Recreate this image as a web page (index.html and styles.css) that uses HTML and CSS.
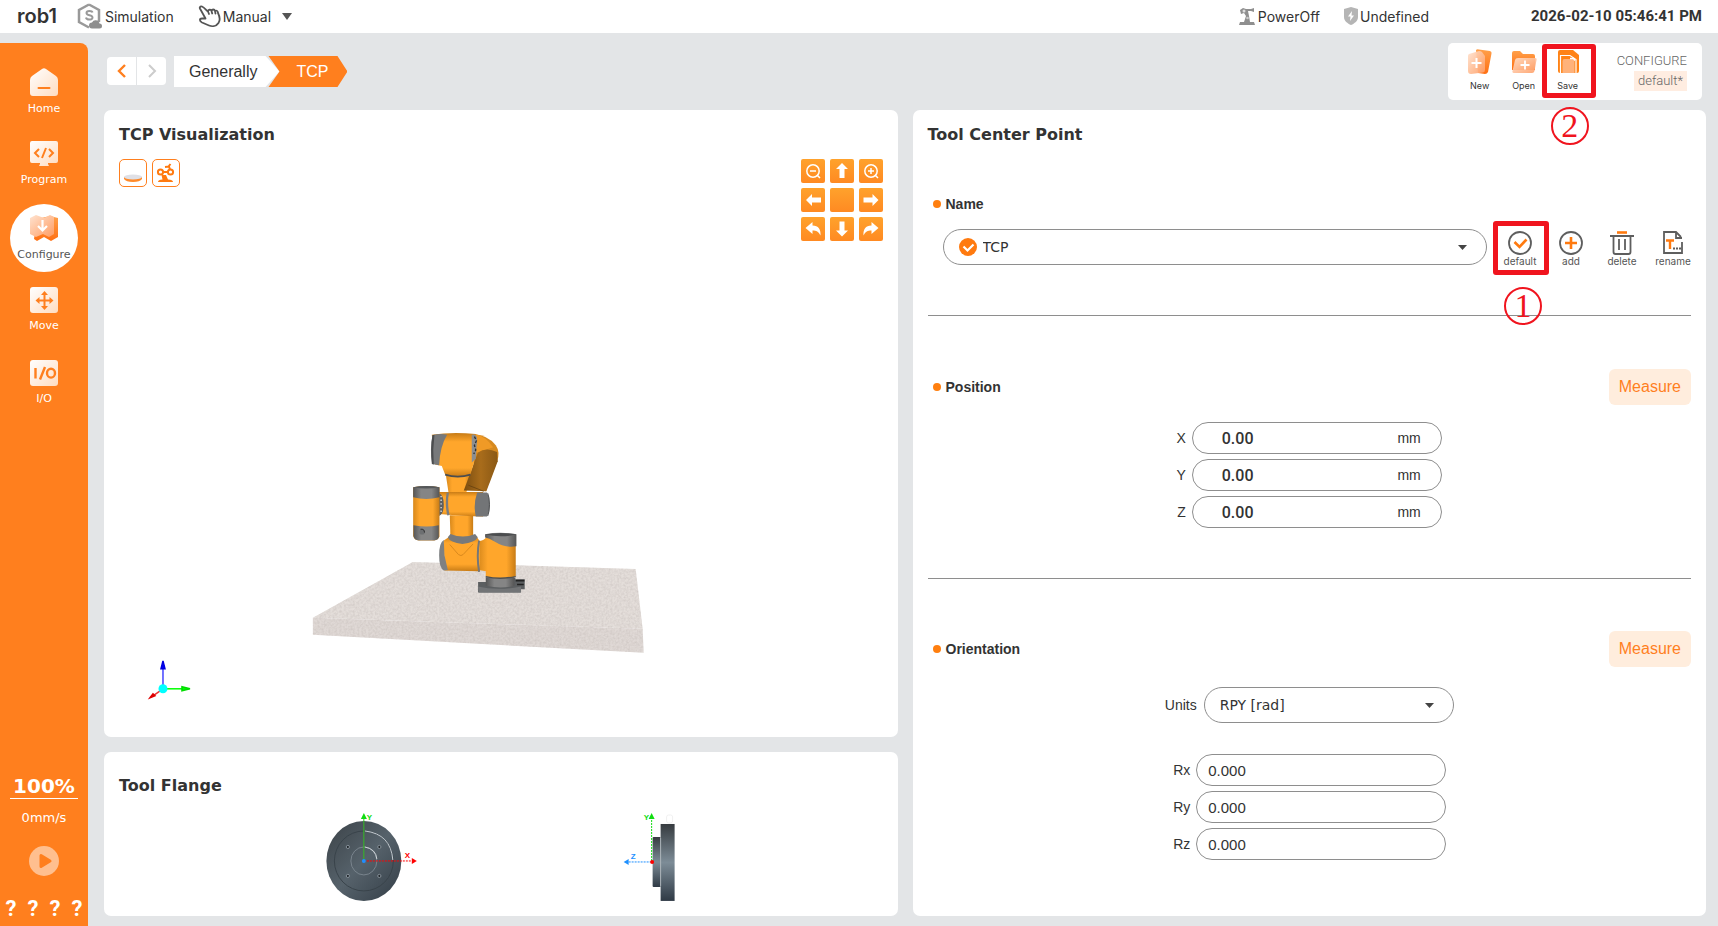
FILE: index.html
```
<!DOCTYPE html>
<html lang="en">
<head>
<meta charset="utf-8">
<title>rob1 - TCP configuration</title>
<meta name="viewport" content="width=device-width, initial-scale=1">
<link rel="stylesheet" href="styles.css">
</head>
<body>
<svg class="defs" aria-hidden="true">
  <defs>
    <linearGradient id="pale" x1="0" y1="0" x2="1" y2="1"><stop offset="0" stop-color="#fff"/><stop offset="1" stop-color="#ffdcc0"/></linearGradient>
    <linearGradient id="peach" x1="0" y1="0" x2="1" y2="1"><stop offset="0" stop-color="#ffe3d0"/><stop offset="1" stop-color="#ff9c62"/></linearGradient>
    <linearGradient id="deep" x1="0" y1="0" x2="0" y2="1"><stop offset="0" stop-color="#ffa04a"/><stop offset="1" stop-color="#ff6f12"/></linearGradient>
    <linearGradient id="limb" x1="0" y1="0" x2="1" y2="0"><stop offset="0" stop-color="#d8891c"/><stop offset=".25" stop-color="#ffa62b"/><stop offset=".75" stop-color="#ffa62b"/><stop offset="1" stop-color="#c87c16"/></linearGradient>
    <linearGradient id="limbh" x1="0" y1="0" x2="0" y2="1"><stop offset="0" stop-color="#c87c16"/><stop offset=".2" stop-color="#ffa62b"/><stop offset=".8" stop-color="#ffa62b"/><stop offset="1" stop-color="#c87c16"/></linearGradient>
    <linearGradient id="cap" x1="0" y1="0" x2="1" y2="0"><stop offset="0" stop-color="#555"/><stop offset=".3" stop-color="#858585"/><stop offset=".7" stop-color="#858585"/><stop offset="1" stop-color="#555"/></linearGradient>
    <linearGradient id="shade" x1="0" y1="0" x2="1" y2="0"><stop offset="0" stop-color="#7b4d10"/><stop offset=".5" stop-color="#a86c1b"/><stop offset="1" stop-color="#8a5814"/></linearGradient>
    <linearGradient id="disc" x1="0" y1="0" x2="1" y2="1"><stop offset="0" stop-color="#3b4247"/><stop offset=".5" stop-color="#56626b"/><stop offset="1" stop-color="#333d46"/></linearGradient>
    <linearGradient id="steel" x1="0" y1="0" x2="0" y2="1"><stop offset="0" stop-color="#363b3f"/><stop offset=".5" stop-color="#7d8c97"/><stop offset="1" stop-color="#2f3a45"/></linearGradient>
    <filter id="grain" x="0" y="0" width="1" height="1">
      <feTurbulence type="fractalNoise" baseFrequency=".45" numOctaves="2" seed="4"/>
      <feColorMatrix values="0 0 0 0 .5  0 0 0 0 .45  0 0 0 0 .43  .8 0 0 0 -.26"/>
      <feComposite in2="SourceGraphic" operator="in" result="n"/>
      <feMerge><feMergeNode in="SourceGraphic"/><feMergeNode in="n"/></feMerge>
    </filter>
  </defs>
</svg>

<header class="header">
  <strong class="robot-name">rob1</strong>
  <span class="status mode-sim">
    <svg width="26" height="26" viewBox="0 0 26 26" fill="none"><path d="M12 1.500 22 7v11l-4 2M12 1.500 2 7v12l10 5.500" stroke="#999" stroke-width="2.500"/><path d="M15.500 9.500C15 7.500 9.500 7 9.500 10c0 3 6 1.500 6 4.500s-6 2.500-6.500 0" stroke="#999" stroke-width="2"/><path d="M15 25.500a3 3 0 0 1 0-6 4 4 0 0 1 7.500 1 2.500 2.500 0 0 1 0 5z" fill="#8e8e8e"/></svg>
    Simulation
  </span>
  <button class="status mode-manual" type="button">
    <svg width="24" height="24" viewBox="0 0 24 24" fill="none" stroke="#555" stroke-width="1.800" stroke-linejoin="round" stroke-linecap="round"><path d="M8.500 14.500 3.500 5.500C2 4 3 2 5 2.500 7.500 3.500 9 6 11 7.500 11 5.500 14 5 14.500 7c.5-2 3-2 3.500 0 1.500-1 3 0 3 2 2 4 2.500 7 .5 10-2 3-6 4-9.500 2.500L5 18.500c-3-1.500-2.500-4 0-4zM11 7.500l1 2.500M14.500 7l.7 2.500M18 7l.5 2.500"/></svg>
    Manual
    <svg class="menu-arrow" width="10" height="7" viewBox="0 0 10 7"><path d="M0 0h10L5 7z" fill="#555"/></svg>
  </button>
  <span class="status power">
    <svg width="17" height="19" viewBox="0 0 17 19"><path d="M1 3 4 1l3 1h5l3-1v4l-3-1H9l1 5 1 6h4l1 3H0l1-3h4l2-6-2-3-3 1z" fill="#8f8f8f"/><circle cx="5" cy="4" r="1.500" fill="#ddd"/><circle cx="8.500" cy="11" r="1.300" fill="#ccc"/></svg>
    PowerOff
  </span>
  <span class="status safety">
    <svg width="14" height="18" viewBox="0 0 14 18"><path d="M7 0l7 2v8c0 4-3.500 6.500-7 8-3.500-1.500-7-4-7-8V2z" fill="#b5b5b5"/><path d="M8 4 4 9.500h2.500L6 14l4-5.500H7.500z" fill="#fff"/></svg>
    Undefined
  </span>
  <time class="clock">2026-02-10 05:46:41 PM</time>
</header>

<div class="app">
  <aside class="sidebar">
    <nav class="nav">
      <a class="nav-item" href="#home">
        <svg width="28" height="28" viewBox="0 0 28 28"><path d="M12 1q2-1.500 4 0l10 7q2 1.500 2 4v13q0 3-3 3H3q-3 0-3-3V12q0-2.500 2-4z" fill="url(#pale)"/><path d="M8.500 20h11" stroke="#ff7f1e" stroke-width="2" stroke-linecap="round"/></svg>
        Home</a>
      <a class="nav-item" href="#program">
        <svg width="28" height="26" viewBox="0 0 28 26"><path d="M2 0h24q2 0 2 2v18q0 2-2 2h-8v1l1 2H9l1-2v-1H2q-2 0-2-2V2q0-2 2-2z" fill="url(#pale)"/><path d="M9 8l-4 4 4 4M19 8l4 4-4 4M16 7l-4 10" stroke="#ff7f1e" stroke-width="2" fill="none"/></svg>
        Program</a>
      <a class="nav-item active" href="#configure" aria-current="page">
        <svg width="30" height="28" viewBox="0 0 30 28"><path d="M8 5 21 2l8 2v19l-7 4-7-4-7 4-3-2z" fill="url(#deep)"/><path d="M1 4l6-3 8 3 6-3 4 2v17l-5 3-6-3-7 3-6-3z" fill="url(#peach)"/><path d="M13.500 6v10M9 12l4.500 4.500L18 12" stroke="#fff" stroke-width="2.200" fill="none"/></svg>
        Configure</a>
      <a class="nav-item" href="#move">
        <svg width="28" height="26" viewBox="0 0 28 26"><rect width="28" height="26" rx="3" fill="url(#pale)"/><path d="M14.500 6v15M7 13.500h15" stroke="#ff7f1e" stroke-width="2"/><path d="M14.500 4l3.500 4h-7zM14.500 23l3.500-4h-7zM5.500 13.500l4-3.500v7zM23.500 13.500l-4-3.500v7z" fill="#ff7f1e"/></svg>
        Move</a>
      <a class="nav-item" href="#io">
        <svg width="28" height="26" viewBox="0 0 28 26"><rect width="28" height="26" rx="3" fill="url(#pale)"/><path d="M5.500 8v10.500M15 7l-5 12.500" stroke="#ff7f1e" stroke-width="2.400"/><ellipse cx="21" cy="13.200" rx="4" ry="4.400" fill="none" stroke="#ff7f1e" stroke-width="2.400"/></svg>
        I/O</a>
    </nav>
    <div class="run">
      <button class="speed" type="button">100%</button>
      <span class="velocity">0mm/s</span>
      <button class="play" type="button" aria-label="Play">
        <svg width="30" height="30" viewBox="0 0 30 30"><circle cx="15" cy="15" r="15" fill="#ffbf8f"/><path d="M12 9.500v11l9-5.500z" fill="#ff7f1e" stroke="#ff7f1e" stroke-width="3" stroke-linejoin="round"/></svg>
      </button>
      <div class="flags"><span>?</span><span>?</span><span>?</span><span>?</span></div>
    </div>
  </aside>

  <main class="main">
    <div class="topbar">
      <div class="history">
        <button type="button" aria-label="Back"><svg width="10" height="14" viewBox="0 0 10 14"><path d="M8 1 2 7l6 6" fill="none" stroke="#ff7f1e" stroke-width="2.400"/></svg></button>
        <button type="button" aria-label="Forward"><svg width="10" height="14" viewBox="0 0 10 14"><path d="m2 1 6 6-6 6" fill="none" stroke="#ccc" stroke-width="2"/></svg></button>
      </div>
      <nav class="crumbs" aria-label="Breadcrumb">
        <a class="crumb" href="#generally">Generally</a>
        <a class="crumb current" href="#tcp">TCP</a>
      </nav>
      <div class="files">
        <button class="file-btn" type="button">
          <svg width="26" height="26" viewBox="0 0 26 26"><path d="M9 1q1-1 3-.5L23 2q2 .5 1.500 2.500L21 23q-1 2-3 2l-7-1z" fill="url(#deep)"/><path d="M2 5 12 2q2 0 3 1l3 4v14q0 2-2 2.500L4 25q-3 0-3-3V7q0-1.500 1-2z" fill="url(#peach)" opacity=".92"/><path d="M9.500 9v10M4.500 14h10" stroke="#fff" stroke-width="2"/></svg>
          New</button>
        <button class="file-btn" type="button">
          <svg width="26" height="26" viewBox="0 0 26 26"><path d="M1 4q0-2 2-2h6l3 3h10q2 0 2 2v14H1z" fill="url(#deep)"/><path d="M7 9h17q2 0 1.500 2l-2 11q-.5 2-2.500 2H3q-2 0-1.500-2L4 11q.5-2 3-2z" fill="url(#peach)" opacity=".9"/><path d="M14 11.500v9M9.500 16h9" stroke="#fff" stroke-width="1.800"/></svg>
          Open</button>
        <button class="file-btn" type="button">
          <svg width="26" height="26" viewBox="0 0 26 26"><path d="M5 1h13l6 5v16q0 2-2 2H5q-2 0-2-2V3q0-2 2-2z" fill="#ff8316"/><path d="M5.500 24V6.500H15l6 4V24" fill="none" stroke="#fff" stroke-width="1.200"/><path d="M7.500 24V12q0-2 2-2h8q2 0 2 2v12z" fill="#ffb27a"/><path d="M15 9.500h3.500l1.500 2" fill="none" stroke="#fff" stroke-width="1.500"/></svg>
          Save
          <span class="mark-box"></span><span class="mark-num">2</span></button>
        <div class="config">
          <span class="config-title">CONFIGURE</span>
          <span class="config-name">default*</span>
        </div>
      </div>
    </div>

    <div class="content">
      <div class="left">
        <section class="panel view">
          <h2>TCP Visualization</h2>
          <div class="view-tools">
            <div class="toggles">
              <button type="button" aria-label="Show plate"><svg width="20" height="20" viewBox="0 0 20 20"><path d="M1 14v2q2 3 9 3t9-3v-2z" fill="#ff8a2a"/><ellipse cx="10" cy="14" rx="9" ry="2.600" fill="#dfe0e6"/></svg></button>
              <button type="button" aria-label="Show robot"><svg width="20" height="20" viewBox="0 0 20 20" fill="none" stroke="#ff7a10" stroke-width="2"><circle cx="4.500" cy="9" r="2.600"/><circle cx="14.500" cy="9" r="2.600"/><path d="M7.500 9h4M14 6.500l-1-3-4 .5M12.500 3.500l2-2.500"/><path d="M2 19q0-2.500 4.500-2.500L5.500 12H10l2 4.500q5 0 5 2.500z" fill="#ff7a10" stroke="none"/></svg></button>
            </div>
            <div class="keypad">
              <button type="button" aria-label="Zoom out"><svg viewBox="0 0 24 24" fill="none" stroke="#fff" stroke-width="1.500"><circle cx="12" cy="12" r="6.200"/><path d="M9 12h6M16 16l3 3"/></svg></button>
              <button type="button" aria-label="Move up"><svg viewBox="0 0 24 24"><path d="M12 4l6 6h-3.500v9h-5v-9H6z" fill="#fff"/></svg></button>
              <button type="button" aria-label="Zoom in"><svg viewBox="0 0 24 24" fill="none" stroke="#fff" stroke-width="1.500"><circle cx="12" cy="12" r="6.200"/><path d="M9 12h6M12 9v6M16 16l3 3"/></svg></button>
              <button type="button" aria-label="Move left"><svg viewBox="0 0 24 24"><path d="M5 12l6-6v3.500h9v5h-9V18z" fill="#fff"/></svg></button>
              <button type="button" aria-label="Reset view"></button>
              <button type="button" aria-label="Move right"><svg viewBox="0 0 24 24"><path d="M19.500 12l-6-6v3.500h-9v5h9V18z" fill="#fff"/></svg></button>
              <button type="button" aria-label="Rotate left"><svg viewBox="0 0 24 24"><path d="M4.500 11l7-6v3.500c6 0 8.500 4 8 10-2-4-4-5-8-5V17z" fill="#fff"/></svg></button>
              <button type="button" aria-label="Move down"><svg viewBox="0 0 24 24"><path d="M12 19.500l6-6h-3.500v-9h-5v9H6z" fill="#fff"/></svg></button>
              <button type="button" aria-label="Rotate right"><svg viewBox="0 0 24 24"><path d="M19.500 11l-7-6v3.500c-6 0-8.500 4-8 10 2-4 4-5 8-5V17z" fill="#fff"/></svg></button>
            </div>
          </div>
          <svg class="scene" viewBox="119 402 764 320" role="img" aria-label="Robot arm on a base plate">
            <g filter="url(#grain)">
              <path d="M413 562 636 569 643 629 313 618z" fill="#e4deda"/>
              <path d="M313 618 643 629 644 653 313 635z" fill="#e0d9d6"/>
            </g>
            <g transform="translate(290 410) scale(.33333)">
              <!-- base -->
              <path d="M565 516h30v-12h82v4h28v30h-12v10H565z" fill="#5b5e60"/>
              <path d="M678 512h26M682 524h20" stroke="#222" stroke-width="5"/>
              <path d="M588 502h86v26q-40 10-86 0z" fill="url(#cap)"/>
              <path d="M564 530q60 14 130 0v18H568z" fill="#727476"/>
              <!-- shoulder -->
              <path d="M566 394q16-2 24-12h88v118q-45 12-90 0v-16l-22-4z" fill="url(#limb)"/>
              <path d="M586 373q46-9 94 0v36q-34 6-66-14-16-10-28-12z" fill="url(#cap)"/>
              <path d="M586 374q46-9 94 0-46 10-94 0z" fill="#4b4d4f"/>
              <path d="M588 500q42 10 90 0" stroke="#4d5052" stroke-width="4" fill="none"/>
              <!-- elbow base -->
              <path d="M462 392l20-14 80 4 8 12v90l-106-2z" fill="url(#limbh)"/>
              <path d="M462 390q-14 8-14 46t14 46l12-2-10-44z" fill="#7e8082"/>
              <path d="M568 392q-8 46 0 94" stroke="#777" stroke-width="6" fill="none"/>
              <path d="M480 404l26 30q8 6 14 0l30-32" fill="none" stroke="#d9891d" stroke-width="3"/>
              <path d="M480 316h70v66q-34 14-68 0z" fill="url(#limb)"/>
              <path d="M474 382l8-10q38 16 74 0l8 10q-8 16-46 20-38-4-44-20z" fill="#77797b"/>
              <!-- upper arm -->
              <path d="M468 194q38 10 76 0l-14 52h-54z" fill="url(#limb)"/>
              <path d="M552 72q44 4 66 34 14 20 4 48l-34 90-26-10-12-80z" fill="#d68a20"/>
              <path d="M556 72q34 8 54 40l-50 16z" fill="#f09a26"/>
              <path d="M564 128q24-18 58-2l2 28-34 90-68-2z" fill="url(#shade)"/>
              <path d="M536 226l46 18" stroke="#5a390d" stroke-width="2"/>
              <path d="M426 74q60-8 132-2l-6 88-10 34q-40 12-76 0l-10-26-20-4z" fill="url(#limbh)"/>
              <path d="M428 76q20-6 44-2-22 36-24 92l-22-4q-6-46 2-86z" fill="#77797b"/>
              <path d="M428 76q-7 42-1 86l5 2q-4-46 2-90z" fill="#4b4d4f"/>
              <path d="M546 74q16-4 16 16l-4 56-12 12z" fill="#8c8e90"/>
              <path d="M554 80l6 12-6 14 4 14-6 12" stroke="#2e3032" stroke-width="4" stroke-dasharray="8 5" fill="none"/>
              <path d="M466 194q38 12 76 0" stroke="#4b4d4f" stroke-width="5" fill="none"/>
              <!-- forearm -->
              <path d="M446 246l28 0h106v74q-52-2-132-8z" fill="url(#limbh)"/>
              <path d="M474 248q-6 34 2 68" stroke="#7a7d80" stroke-width="7" fill="none"/>
              <path d="M562 248h30q8 16 8 36t-8 36h-34q-8-36 4-72z" fill="#737577"/>
              <path d="M594 250q5 12 5 34t-5 34" stroke="#4b4d4f" stroke-width="3" fill="none"/>
              <!-- wrist -->
              <path d="M448 250q14 6 14 34t-14 34z" fill="#5c5f61"/>
              <path d="M454 258v54" stroke="#ddd" stroke-width="4" stroke-dasharray="4 7"/>
              <path d="M370 232q40-8 79 0v148q-4 10-16 12h-46q-14-2-17-14z" fill="url(#limb)"/>
              <path d="M370 232q40-8 79 0v30q-40 10-79 0zM371 346q40 8 76 0v36q-2 8-14 10h-46q-14-2-16-14z" fill="url(#cap)"/>
              <path d="M370 232q40-8 79 0-40 8-79 0z" fill="#55585a"/>
              <circle cx="397" cy="366" r="8" fill="#6d6f71"/><path d="M392 358q12-2 12 10" stroke="#222" stroke-width="2.500" fill="none"/>
            </g>
            <g stroke-width="1.500">
              <path d="M163 689v-20" stroke="#44f"/><path d="M163 661l2 8h-4z" fill="#00f" stroke="#00d"/>
              <path d="M163 689h20" stroke="#0f0"/><path d="M190 689l-8-2v4z" fill="#0f0" stroke="#0d0"/>
              <path d="M163 689l-10 7" stroke="#e33"/><path d="M150 698l3-4 2 2z" fill="#e00" stroke="#d00"/>
              <circle cx="163" cy="689" r="4.500" fill="#0ff"/>
            </g>
          </svg>
        </section>

        <section class="panel flange">
          <h2>Tool Flange</h2>
          <svg class="flange-art" viewBox="119 806 764 98" role="img" aria-label="Tool flange axes, front and side">
            <ellipse cx="364" cy="861" rx="37.500" ry="40" fill="url(#disc)"/>
            <ellipse cx="364" cy="861" rx="29.500" ry="30" fill="none" stroke="#39434a" stroke-width="1"/>
            <path d="M365 831q26 3 28 29" stroke="#c5ccd2" fill="none"/>
            <ellipse cx="364" cy="861" rx="13" ry="14" fill="none" stroke="#78848d"/>
            <path d="M365 847q11 2 12 12" stroke="#d0d5d9" fill="none"/>
            <g fill="#22282c" stroke="#87919a"><circle cx="348" cy="847" r="1.600"/><circle cx="379.500" cy="847" r="1.600"/><circle cx="348" cy="876" r="1.600"/><circle cx="379.500" cy="876" r="1.600"/></g>
            <path d="M364 860v-42" stroke="#3b2"/><path d="M364 813l3 6h-6z" fill="#1d1"/>
            <path d="M364 861h48" stroke="#f00" stroke-dasharray="2 1"/><path d="M417 861l-5-3v6z" fill="#f00"/>
            <circle cx="364" cy="861" r="2" fill="#1e90ff"/>
            <g class="axis"><text x="367" y="820" fill="#1d1">Y</text><text x="405" y="858" fill="#f00">X</text><text x="644" y="820" fill="#1d1">Y</text><text x="631" y="859" fill="#1e90ff">Z</text></g>
            <rect x="667" y="815" width="6" height="8" rx="2" fill="none" stroke="#f0f0f0"/>
            <rect x="653" y="837" width="8" height="50" rx="1" fill="url(#steel)"/>
            <rect x="661" y="824" width="14" height="77" fill="url(#steel)"/><path d="M661 838v48" stroke="#aab2b8"/>
            <path d="M652 861v-43" stroke="#1d1" stroke-dasharray="2 1"/><path d="M652 813l3 6h-6z" fill="#1d1"/>
            <path d="M652 862h-23" stroke="#1e90ff" stroke-dasharray="2 1"/><path d="M624 862l5-3v6z" fill="#1e90ff"/>
            <circle cx="652.500" cy="862" r="2" fill="#f00"/>
          </svg>
        </section>
      </div>

      <section class="panel tcp">
        <h2>Tool Center Point</h2>
        <div class="section name-section">
          <div class="section-head"><h3>Name</h3></div>
          <div class="name-row">
            <div class="select name-select">
              <svg class="check" width="18" height="18" viewBox="0 0 18 18"><circle cx="9" cy="9" r="9" fill="#ff7a0f"/><path d="M4.500 8.500l4 4 6-6" fill="none" stroke="#fff" stroke-width="2.200"/></svg>
              <select aria-label="Name"><option>TCP</option></select>
              <svg class="caret" width="9" height="5" viewBox="0 0 9 5"><path d="M0 0h9L4.500 5z" fill="#444"/></svg>
            </div>
            <button class="tool" type="button">
              <svg width="24" height="24" viewBox="0 0 24 24" fill="none"><circle cx="12" cy="12" r="11" stroke="#5e5e5e" stroke-width="1.800"/><path d="M6.500 11l5 5 7-7.500" stroke="#ff7a0f" stroke-width="2.600"/></svg>
              default<span class="mark-box"></span><span class="mark-num">1</span></button>
            <button class="tool" type="button">
              <svg width="24" height="24" viewBox="0 0 24 24" fill="none"><circle cx="12" cy="12" r="11" stroke="#5e5e5e" stroke-width="1.800"/><path d="M12 6v12M6 12h12" stroke="#ff7a0f" stroke-width="2.600"/></svg>
              add</button>
            <button class="tool" type="button">
              <svg width="24" height="24" viewBox="0 0 24 24" fill="none" stroke="#5e5e5e" stroke-width="1.800"><path d="M0 5h24M3.500 5v16q0 2 2 2h13q2 0 2-2V5M9 8v11M15 8v11"/><path d="M7 1.500h10" stroke="#ff7a0f" stroke-width="2.600"/></svg>
              delete</button>
            <button class="tool" type="button">
              <svg width="24" height="24" viewBox="0 0 24 24" fill="none" stroke="#5e5e5e" stroke-width="1.800"><path d="M21 11v11H3V1h12l5 5M15 1v6h6"/><path d="M5 9.500h8M9 9.500V18" stroke="#ff7a0f" stroke-width="2.400"/><path d="M12 17.500h8" stroke-dasharray="2 1"/></svg>
              rename</button>
          </div>
        </div>

        <div class="section position-section">
          <div class="section-head"><h3>Position</h3><button class="measure" type="button">Measure</button></div>
          <div class="fields lengths">
            <div class="row"><label for="px">X</label><div class="field"><input id="px" value="0.00"><span>mm</span></div></div>
            <div class="row"><label for="py">Y</label><div class="field"><input id="py" value="0.00"><span>mm</span></div></div>
            <div class="row"><label for="pz">Z</label><div class="field"><input id="pz" value="0.00"><span>mm</span></div></div>
          </div>
        </div>

        <div class="section orientation-section">
          <div class="section-head"><h3>Orientation</h3><button class="measure" type="button">Measure</button></div>
          <div class="units">
            <label for="units">Units</label>
            <div class="select">
              <select id="units"><option>RPY [rad]</option></select>
              <svg class="caret" width="9" height="5" viewBox="0 0 9 5"><path d="M0 0h9L4.500 5z" fill="#444"/></svg>
            </div>
          </div>
          <div class="fields angles">
            <div class="row"><label for="rx">Rx</label><div class="field"><input id="rx" value="0.000"></div></div>
            <div class="row"><label for="ry">Ry</label><div class="field"><input id="ry" value="0.000"></div></div>
            <div class="row"><label for="rz">Rz</label><div class="field"><input id="rz" value="0.000"></div></div>
          </div>
        </div>
      </section>
    </div>
  </main>
</div>
</body>
</html>
```
FILE: styles.css
```
:root {
  --orange: #ff7f1e;
  --bg: #e3e5e7;
  --ink: #333;
  --line: #8e8e8e;
  --mark: #f0141e;
}

* { box-sizing: border-box; }

body {
  margin: 0;
  min-height: 100vh;
  display: flex;
  flex-direction: column;
  background: var(--bg);
  color: var(--ink);
  font-family: "Liberation Sans", sans-serif;
  font-size: 14px;
}

button {
  border: 0;
  padding: 0;
  background: none;
  color: inherit;
  font: inherit;
}

a { color: inherit; text-decoration: none; }
svg { display: block; flex: none; }
.defs { position: absolute; width: 0; height: 0; }

/* Header */
.header {
  height: 33px;
  flex: none;
  display: flex;
  align-items: center;
  padding: 0 16px 1px 17px;
  background: #fff;
  font-family: Inter, sans-serif;
}
.robot-name { font-size: 20px; font-weight: 600; }
.status {
  display: flex;
  align-items: center;
  gap: 2px;
  font-family: Inter, sans-serif;
  font-size: 14px;
}
.mode-sim { margin-left: 20px; }
.mode-manual { margin-left: 23px; }
.menu-arrow { margin-left: 9px; }
.power { margin-left: auto; }
.safety { margin-left: 24px; }
.clock { margin-left: 102px; font-family: Roboto, sans-serif; font-size: 15px; font-weight: 700; }

/* Shell */
.app { flex: 1; display: flex; padding-top: 10px; }
.sidebar {
  width: 88px;
  flex: none;
  display: flex;
  flex-direction: column;
  justify-content: space-between;
  padding: 15px 0 2px;
  background: var(--orange);
  border-radius: 0 8px 0 0;
  color: #fff;
  font-family: "DejaVu Sans", sans-serif;
}
.nav { display: flex; flex-direction: column; align-items: center; gap: 5px; }
.nav-item {
  width: 68px;
  height: 68px;
  display: flex;
  flex-direction: column;
  align-items: center;
  gap: 6px;
  padding-top: 10px;
  border-radius: 50%;
  font-size: 11px;
  line-height: 14px;
}
.nav-item.active { background: #fff; color: #555; }
.run { display: flex; flex-direction: column; align-items: center; }
.speed {
  width: 68px;
  border-bottom: 1px solid #fff;
  font-size: 20px;
  font-weight: 700;
  line-height: 24px;
}
.velocity { margin-top: 11px; font-size: 13px; line-height: 16px; }
.play { margin-top: 20px; }
.flags {
  align-self: stretch;
  display: flex;
  justify-content: space-around;
  margin-top: 18px;
  font: 700 22px/30px Roboto, sans-serif;
}

.main {
  flex: 1;
  min-width: 0;
  display: flex;
  flex-direction: column;
  gap: 10px;
  padding: 0 12px 10px 16px;
}

/* Top bar */
.topbar { height: 57px; display: flex; align-items: center; padding: 0 4px 0 3px; }
.history { display: flex; gap: 1px; margin-bottom: 1px; }
.history button {
  width: 29px;
  height: 28px;
  display: grid;
  place-items: center;
  background: #fff;
}
.history button:first-child { border-radius: 4px 0 0 4px; }
.history button:last-child { border-radius: 0 4px 4px 0; }
.crumbs { display: flex; margin-left: 8px; font: 16px/31px "Liberation Sans", sans-serif; }
.crumb {
  padding: 0 22px 0 15px;
  background: #fff;
  clip-path: polygon(0 0, calc(100% - 14px) 0, 100% 50%, calc(100% - 14px) 100%, 0 100%);
}
.crumb.current {
  margin-left: -11px;
  padding: 0 19px 0 28px;
  background: var(--orange);
  color: #fff;
  clip-path: polygon(0 0, calc(100% - 10px) 0, 100% 50%, calc(100% - 10px) 100%, 0 100%, 11px 50%);
}
.files {
  height: 57px;
  display: flex;
  margin-left: auto;
  padding: 6px 15px 0 10px;
  background: #fff;
  border-radius: 5px;
}
.file-btn {
  position: relative;
  width: 44px;
  height: 43px;
  display: flex;
  flex-direction: column;
  align-items: center;
  gap: 5px;
  font: 9px/12px Inter, sans-serif;
}
.config {
  display: flex;
  flex-direction: column;
  align-items: flex-end;
  margin-left: 27px;
  padding-top: 2px;
  color: #666;
  font-family: Roboto, sans-serif;
  font-size: 13px;
  font-weight: 300;
  line-height: 20px;
}
.config-name { padding: 0 4px; background: #ffede1; }

/* Numbered callouts */
.mark-box {
  position: absolute;
  inset: -5px -6px -6px -4px;
  border: 5px solid var(--mark);
  border-radius: 3px;
}
.mark-num {
  position: absolute;
  top: 58px;
  left: 50%;
  z-index: 1;
  width: 38px;
  height: 38px;
  margin-left: -17px;
  border: 2px solid var(--mark);
  border-radius: 50%;
  color: var(--mark);
  font: 34px/34px "Liberation Serif", serif;
  text-align: center;
}

/* Panels */
.content {
  flex: 1;
  display: grid;
  grid-template-columns: minmax(0, 1fr) minmax(0, 1fr);
  gap: 15px;
}
.left { display: flex; flex-direction: column; gap: 15px; }
.panel {
  display: flex;
  flex-direction: column;
  padding: 15px;
  background: #fff;
  border-radius: 7px;
}
h2 { margin: 0; font: 700 16px/20px "DejaVu Sans", sans-serif; }
.view { flex: 1; }
.view-tools { display: flex; justify-content: space-between; margin-top: 14px; }
.toggles { display: flex; gap: 5px; }
.toggles button {
  width: 28px;
  height: 28px;
  display: grid;
  place-items: center;
  border: 1px solid var(--orange);
  border-radius: 5px;
}
.keypad { display: grid; grid-template-columns: repeat(3, 24px); grid-auto-rows: 24px; gap: 5px; }
.keypad button { background: linear-gradient(#ffa22c, #ff8a22); border-radius: 2px; }
.scene { width: 100%; margin-top: auto; }
.flange { padding: 24px 15px 12px; }
.flange-art { width: 100%; margin-top: 10px; }
.axis { font: 700 8px "Liberation Sans", sans-serif; }

/* Tool center point form */
.section-head { height: 36px; display: flex; align-items: center; justify-content: space-between; }
h3 {
  display: flex;
  align-items: center;
  gap: 5px;
  margin: 0 0 0 5px;
  font: 700 14px/20px "Liberation Sans", sans-serif;
}
h3::before { content: ""; width: 8px; height: 8px; border-radius: 50%; background: #ff7f0f; }
.name-section { padding: 41px 0 48px; border-bottom: 1px solid var(--line); }
.name-row { display: flex; gap: 15px; margin: 7px 0 0 15px; }
.select { position: relative; width: 250px; }
.name-select { width: auto; flex: 1; }
select {
  width: 100%;
  height: 36px;
  padding: 0 15px;
  appearance: none;
  border: 1px solid var(--line);
  border-radius: 18px;
  background: #fff;
  color: var(--ink);
  font: 14px "DejaVu Sans", sans-serif;
}
.name-select select { padding-left: 39px; }
.check { position: absolute; left: 16px; top: 9px; }
.caret { position: absolute; right: 20px; top: 16px; }
.tool {
  position: relative;
  width: 36px;
  height: 38px;
  display: flex;
  flex-direction: column;
  align-items: center;
  padding-top: 2px;
  color: #555;
  font: 10px/12px Inter, sans-serif;
}
.tool .mark-box { inset: -8px -11px -8px -9px; }
.tool .mark-num { top: 58px; margin-left: -16px; }

.position-section { padding: 53px 0 50px; border-bottom: 1px solid var(--line); }
.measure {
  height: 36px;
  padding: 0 10px;
  background: #ffeddd;
  border-radius: 6px;
  color: var(--orange);
  font-size: 16px;
}
.fields { display: flex; flex-direction: column; align-items: center; gap: 5px; }
.row { display: flex; align-items: center; gap: 6px; }
.row label { width: 16px; text-align: right; }
.field {
  width: 250px;
  height: 32px;
  display: flex;
  align-items: center;
  border: 1px solid var(--line);
  border-radius: 16px;
}
.field input {
  flex: 1;
  min-width: 0;
  height: 30px;
  padding: 0;
  border: 0;
  background: none;
  color: var(--ink);
  font: 15px "Liberation Sans", sans-serif;
}
.lengths { margin-top: 17px; padding-right: 7px; }
.lengths .field { padding: 0 20px 0 29px; }
.lengths .field input { font: 500 16px Roboto, sans-serif; }
.orientation-section { padding-top: 52px; }
.units {
  display: flex;
  align-items: center;
  justify-content: center;
  gap: 7px;
  margin-top: 20px;
}
.angles { margin-top: 31px; }
.angles .row label { width: 18px; }
.angles .field { padding: 0 11px; }
```
